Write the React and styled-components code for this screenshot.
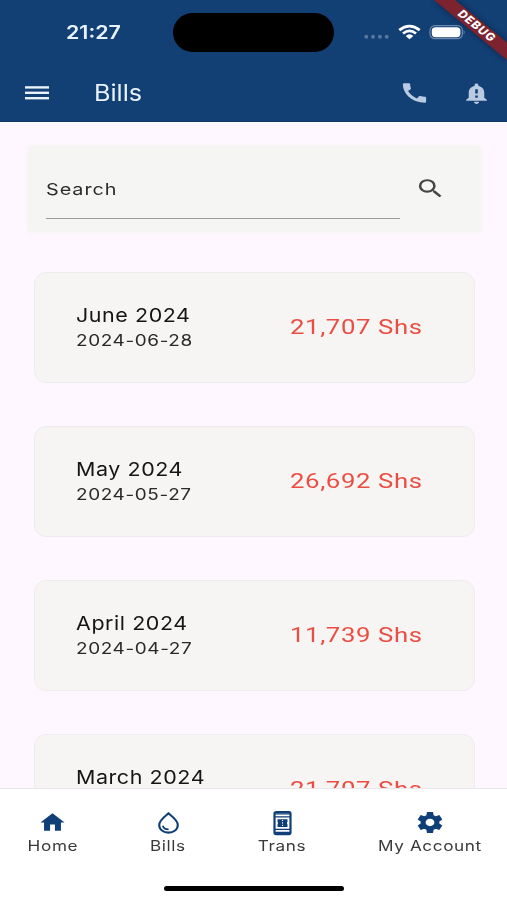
import React from 'react';
import styled, { createGlobalStyle } from 'styled-components';
import {
	MdCall,
	MdNotificationImportant,
	MdSearch,
	MdHome,
} from 'react-icons/md';

const GlobalStyle = createGlobalStyle`
	* { box-sizing: border-box; }
	body {
		margin: 0;
		background: #fef7ff;
		font-family: Inter, 'Liberation Sans', sans-serif;
	}
`;

const Screen = styled.div`
	position: relative;
	display: flex;
	flex-direction: column;
	width: 507px;
	height: 900px;
	overflow: hidden;
	background: #fef7ff;
`;

const Header = styled.header`
	flex: none;
	height: 122px;
	background: #123f74;
	color: #eaf2fc;
	border-bottom: 1px solid #0f3766;
`;

const StatusBar = styled.div`
	display: flex;
	align-items: center;
	height: 64px;
	padding-left: 66px;
`;

/* wide type: every label is stretched horizontally from its left edge */
const Wide = styled.span`
	display: block;
	white-space: nowrap;
	transform: scaleX(${(props) => props.$x || 1.2});
	transform-origin: ${(props) => props.$origin || 'left'} center;
`;

const Clock = styled(Wide)`
	width: 107px;
	margin-top: 1px;
	font-size: 18px;
	font-weight: 600;
	line-height: 22px;
`;

const Island = styled.div`
	width: 161px;
	height: 39px;
	border-radius: 20px;
	background: #000;
`;

const StatusIcons = styled.svg`
	width: 104px;
	height: 16px;
	margin-left: 29px;
`;

const AppBar = styled.div`
	display: flex;
	align-items: center;
	height: 58px;
	padding: 0 15.5px 0 21px;
`;

const Icon = styled.span`
	display: block;
	flex: none;
	width: ${(props) => props.$w || 31}px;
	height: ${(props) => props.$h || 25}px;
	color: ${(props) => props.$color || 'inherit'};
	svg {
		display: block;
		width: 100%;
		height: 100%;
	}
`;

const Title = styled.h1`
	flex: 1;
	margin: 0 0 0 40.5px;
	font-size: 22.3px;
	font-weight: 400;
	line-height: 28px;
`;

const Actions = styled.div`
	display: flex;
	align-items: center;
	gap: 31px;
`;

const Ribbon = styled.svg`
	position: absolute;
	top: 0;
	right: 0;
	width: 87px;
	height: 72px;
`;

const Content = styled.main`
	flex: 1;
	min-height: 0;
	overflow: hidden;
	padding: 24px 26px 0 28px;
`;

const SearchBox = styled.div`
	display: flex;
	align-items: flex-start;
	height: 86px;
	padding: 0 35px 0 18px;
	background: #f5f5f3;
	border-radius: 4px;
	box-shadow: 0 0 4px 1px #f6f5f4;
`;

const Field = styled.div`
	width: 354px;
	height: 73px;
	padding: 32px 0 0;
	border-bottom: 1.5px solid #999;
	color: #2b2b2b;
	font-size: 16.5px;
	line-height: 22px;
	letter-spacing: 0.8px;
`;

const SearchIcon = styled(Icon)`
	margin: 30px 0 0 15.5px;
`;

const List = styled.div`
	display: flex;
	flex-direction: column;
	gap: 43px;
	margin: 39.5px 6.5px 0 5.5px;
`;

const Card = styled.article`
	display: flex;
	flex: none;
	height: 111px;
	padding: 30px 51px 0 41.5px;
	border: 1.5px solid #eeecee;
	border-radius: 12px;
	background: #f6f5f3;
`;

const Info = styled.div`
	width: 213.5px;
`;

const Month = styled(Wide)`
	color: #151515;
	font-size: 19px;
	line-height: 26px;
	letter-spacing: 0.5px;
`;

const DateText = styled(Wide)`
	color: #2a2a2a;
	font-size: 15.6px;
	line-height: 24px;
	letter-spacing: 0.5px;
`;

const Amount = styled(Wide)`
	margin-top: 11px;
	color: #ea4e43;
	font-size: 21px;
	line-height: 26px;
	letter-spacing: 0.5px;
	font-family: Roboto, sans-serif;
`;

const BottomBar = styled.footer`
	flex: none;
	height: 112px;
	background: #fff;
	border-top: 1px solid #e9e6ec;
`;

const Tabs = styled.nav`
	display: flex;
	gap: 72px;
	height: 97px;
	padding: 20px 0 0 27px;
`;

const Tab = styled.div`
	display: flex;
	flex: none;
	flex-direction: column;
	align-items: center;
	width: ${(props) => props.$width}px;
	color: #103f78;
`;

const IconSlot = styled.div`
	display: flex;
	align-items: center;
	height: 27px;
`;

const TabLabel = styled(Wide)`
	color: #3a3a3a;
	font-size: 14.2px;
	line-height: 20px;
	letter-spacing: 0.5px;
`;

const HomeIndicator = styled.div`
	width: 180px;
	height: 5px;
	margin-left: 164px;
	border-radius: 3px;
	background: #000;
`;

const MenuIcon = () => (
	<svg viewBox="0 0 32 26" fill="currentColor">
		<rect x="4" y="6.2" width="24" height="2.4" />
		<rect x="4" y="11.6" width="24" height="2.4" />
		<rect x="4" y="17" width="24" height="2.4" />
	</svg>
);

const DropIcon = () => (
	<svg viewBox="0 0 31 25" fill="none" stroke="currentColor">
		<path d="M15.5 3.4C11.2 7 6.2 10.4 6.2 15C6.2 19.6 10.4 22.6 15.5 22.6S24.8 19.6 24.8 15C24.8 10.4 19.8 7 15.5 3.4Z" strokeWidth="2.1" />
		<path d="M9.8 15.7C10.4 18.3 12.8 19.3 15.6 19.3" strokeWidth="1.7" />
	</svg>
);

const TicketPhoneIcon = () => (
	<svg viewBox="0 0 31 26" fill="none" stroke="currentColor">
		<rect x="7.5" y="2.1" width="16" height="22" rx="1.6" strokeWidth="2.2" />
		<path d="M8 3.9H23M8 22.4H23" strokeWidth="1.4" />
		<path d="M8 6.9H23M8 19.4H23" strokeWidth="1.2" />
		<path d="M10.5 9.2H20.5V11.8Q19.3 13.1 20.5 14.4V17H10.5V14.4Q11.7 13.1 10.5 11.8Z" fill="currentColor" stroke="none" />
		<path d="M15.5 9.9V16.4" stroke="#fff" strokeWidth="1.1" strokeDasharray="1.2 1.2" />
	</svg>
);

const GearIcon = () => (
	<svg viewBox="0 0 24 24" fill="currentColor" preserveAspectRatio="none">
		<path d="M19.44 12.99l-.01.02c.04-.33.08-.67.08-1.01 0-.34-.03-.66-.07-.99l.01.02 2.44-1.92-2.43-4.22-2.87 1.16.01.01c-.52-.4-1.09-.74-1.71-1h.01L14.44 2H9.57l-.44 3.07h.01c-.62.26-1.19.6-1.71 1l.01-.01-2.88-1.17-2.44 4.22 2.44 1.92.01-.02c-.04.33-.07.65-.07.99 0 .34.03.68.08 1.01l-.01-.02-2.1 1.65-.33.26 2.43 4.2 2.88-1.15-.02-.04c.53.41 1.1.75 1.73 1.01h-.03L9.58 22h4.85s.03-.18.06-.42l.38-2.65h-.01c.62-.26 1.2-.6 1.73-1.01l-.02.04 2.88 1.15 2.43-4.2s-.14-.12-.33-.26l-2.11-1.66zM12 15.5c-1.93 0-3.5-1.57-3.5-3.5s1.57-3.5 3.5-3.5 3.5 1.57 3.5 3.5-1.57 3.5-3.5 3.5z" />
	</svg>
);

const bills = [
	{ month: 'June 2024', date: '2024-06-28', amount: '21,707 Shs' },
	{ month: 'May 2024', date: '2024-05-27', amount: '26,692 Shs' },
	{ month: 'April 2024', date: '2024-04-27', amount: '11,739 Shs' },
	{ month: 'March 2024', date: '2024-03-27', amount: '21,707 Shs' },
];

const tabs = [
	{ label: 'Home', icon: MdHome, width: 51, w: 29, h: 25 },
	{ label: 'Bills', icon: DropIcon, width: 36, w: 31, h: 25 },
	{ label: 'Trans', icon: TicketPhoneIcon, width: 48, w: 31, h: 26 },
	{ label: 'My Account', icon: GearIcon, width: 103, w: 30, h: 25 },
];

const Status = () => (
	<StatusBar>
		<Clock $x={1.19}>21:27</Clock>
		<Island />
		<StatusIcons viewBox="363 23.5 104 16">
			<g fill="#56779f">
				<circle cx="366.3" cy="36.3" r="2" />
				<circle cx="373" cy="36.3" r="2" />
				<circle cx="379.9" cy="36.3" r="2" />
				<circle cx="386.7" cy="36.3" r="2" />
			</g>
			<g fill="none" stroke="#fff" strokeWidth="2.8">
				<path d="M399.3 29.6Q409.5 21.6 419.7 29.6" />
				<path d="M403 33Q409.5 27.8 416 33" />
			</g>
			<path d="M405.6 35.4Q409.5 32.2 413.4 35.4L409.5 38.8Z" fill="#fff" />
			<rect x="430" y="25.2" width="32.4" height="13" rx="4.8" fill="none" stroke="#6c8aaf" strokeWidth="1.2" />
			<rect x="431.8" y="26.7" width="28.6" height="10" rx="3.6" fill="#fff" />
			<path d="M463.6 29.8q2.2 1.8 0 4z" fill="#6c8aaf" />
		</StatusIcons>
	</StatusBar>
);

const DebugRibbon = () => (
	<Ribbon viewBox="420 0 87 72">
		<defs>
			<filter id="ribbonShadow" x="-20%" y="-20%" width="140%" height="140%">
				<feGaussianBlur stdDeviation="3" />
			</filter>
		</defs>
		<path d="M434 0H455L507 43V60Z" fill="#000" opacity="0.4" filter="url(#ribbonShadow)" />
		<path d="M434 0H455L510 45V62.5Z" fill="#7d222f" />
		<text
			transform="translate(477 26) scale(1.29 1.056) rotate(45)"
			textAnchor="middle"
			y="3.4"
			fill="#fff"
			fontFamily="Inter, sans-serif"
			fontSize="9.8"
			fontWeight="800"
			letterSpacing="0.7"
		>
			DEBUG
		</text>
	</Ribbon>
);

const BillCard = ({ month, date, amount }) => (
	<Card>
		<Info>
			<Month $x={1.13}>{month}</Month>
			<DateText $x={1.215}>{date}</DateText>
		</Info>
		<Amount $x={1.225}>{amount}</Amount>
	</Card>
);

const App = () => (
	<Screen>
		<GlobalStyle />
		<Header>
			<Status />
			<AppBar>
				<Icon $w={32} $h={26}><MenuIcon /></Icon>
				<Title><Wide $x={1.13}>Bills</Wide></Title>
				<Actions>
					<Icon $color="#b9cbe2" $h={26}><MdCall preserveAspectRatio="none" /></Icon>
					<Icon $color="#b9cbe2"><MdNotificationImportant preserveAspectRatio="none" /></Icon>
				</Actions>
			</AppBar>
		</Header>
		<DebugRibbon />
		<Content>
			<SearchBox>
				<Field><Wide>Search</Wide></Field>
				<SearchIcon $color="#454545"><MdSearch preserveAspectRatio="none" /></SearchIcon>
			</SearchBox>
			<List>
				{bills.map((bill) => <BillCard key={bill.month} {...bill} />)}
			</List>
		</Content>
		<BottomBar>
			<Tabs>
				{tabs.map(({ label, icon: TabIcon, width, w, h }) => (
					<Tab key={label} $width={width}>
						<IconSlot>
							<Icon $w={w} $h={h}><TabIcon preserveAspectRatio="none" /></Icon>
						</IconSlot>
						<TabLabel $x={1.21} $origin="center">{label}</TabLabel>
					</Tab>
				))}
			</Tabs>
			<HomeIndicator />
		</BottomBar>
	</Screen>
);

export default App;
